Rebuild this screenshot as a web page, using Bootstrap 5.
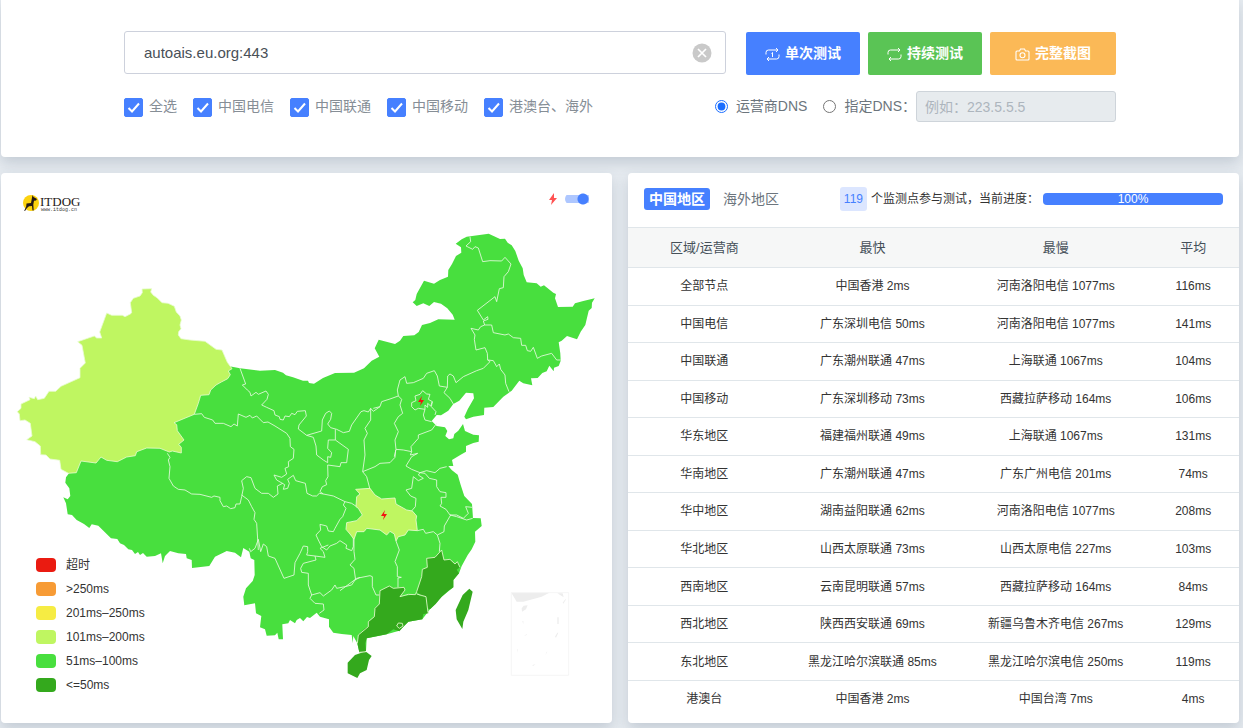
<!DOCTYPE html>
<html lang="zh-CN">
<head>
<meta charset="utf-8">
<meta name="viewport" content="width=device-width, initial-scale=1">
<title>ITDOG TCPing</title>
<link href="https://cdn.jsdelivr.net/npm/bootstrap@5.3.0/dist/css/bootstrap.min.css" rel="stylesheet">
<style>
:root{--brand:#4680ff}
body{background:#e6ebf0;font-family:"Liberation Sans","Noto Sans CJK SC",sans-serif;font-size:14px;color:#3b4248}
.page{padding:0 4px 5px 1px}
.panel{background:#fff;border-radius:4px;box-shadow:0 6px 14px rgba(60,80,105,.2)}
.query{border-radius:0 0 4px 4px;padding:31px 16px 35px}
.query-inner{max-width:992px}
.target-box{min-width:260px}
.target-input{height:43px;padding:0 48px 0 19px;font-size:15px;border-color:#cdd1dc;border-radius:3px;color:#495057}
.clear-btn{right:14px;top:12px;width:20px;height:20px;line-height:0}
.action{height:43px;font-size:14px;font-weight:700;color:#fff;border:0;border-radius:2px;padding:0 19px;margin-top:1px}
.action:hover{color:#fff}
.action svg{margin-right:5px}
.action-blue,.action-blue:hover{background:var(--brand)}
.action-green,.action-green:hover{background:#5ac455}
.action-orange,.action-orange:hover{background:#fbb957;padding:0 25px}
.options{margin-top:16px;color:#868e96}
.tick{appearance:none;width:19px;height:19px;margin:2px 6px 0 0;border-radius:2px;border:1px solid #adb5bd}
.tick:checked{border-color:var(--brand);background:var(--brand) url("data:image/svg+xml,%3Csvg xmlns='http://www.w3.org/2000/svg' viewBox='0 0 17 17'%3E%3Cpath d='M3.500 9l3.500 3.500 7-8' fill='none' stroke='white' stroke-width='2'/%3E%3C/svg%3E") center/17px}
.dns{color:#6c757d}
.dns input[type=radio]{width:13px;height:13px;margin:0 8px 0 0;accent-color:#1a6dff}
.dns-input{width:200px;height:31px;padding:0 8px;font-size:14px;border-radius:3px;border-color:#ced4da}
.dns-input:disabled{background:#e7ebee}
.dns-input::placeholder{color:#adb5bd}
.panels{grid-template-columns:minmax(0,1fr);margin-top:16px}
@media(min-width:992px){.panels{grid-template-columns:minmax(0,1fr) minmax(0,1fr)}}
.map-head{padding:16px 22px 0;height:48px}
.toggle{appearance:none;width:25px;height:12px;margin:0;background:radial-gradient(circle at 18px 6px,var(--brand) 5px,transparent 6px),linear-gradient(#aec7ff,#aec7ff) 0 2px/24px 8px no-repeat;border-radius:6px}
.legend-list{left:35px;bottom:26px;font-size:12px;line-height:24px;color:#333}
.swatch{width:20px;height:14px;border-radius:4px;margin-right:10px}
.c-timeout{background:#ea1b11}.c-250{background:#f79b35}.c-201{background:#f6ec43}
.c-101{background:#bff661}.c-51{background:#48df3e}.c-50{background:#34a91d}
.result-head{height:54px;padding:0 16px 2px}
.region{font-size:14px;line-height:22px;padding:0 5px;border-radius:3px;color:#6c757d;text-decoration:none}
.region.active{background:var(--brand);color:#fff;font-weight:700}
.status{font-size:12px;color:#333}
.node-count{background:#dce6ff;color:var(--brand);border-radius:3px;line-height:24px;padding:0 4px;margin-right:4px}
.progress.test-progress{width:180px;height:12px;border-radius:4px;margin-left:4px;font-size:12px}
.test-progress .progress-bar{background:var(--brand)}
.result-table{table-layout:fixed;height:490px;font-size:12px;text-align:center;color:#333;border-color:#e0e6ea}
.result-table th,.result-table td{font-weight:400;padding:0 4px;vertical-align:middle;border:0;border-bottom:1px solid #e0e6ea}
.result-table thead th{height:40px;background:#f6f7f7;border-top:1px solid #e0e6ea;font-size:13px;color:#455059}
.result-table tbody tr:last-child>*{border-bottom:0}
</style>
</head>
<body>
<main class="page">
<section class="panel query">
 <div class="query-inner mx-auto">
  <form class="d-flex flex-wrap flex-lg-nowrap">
   <div class="target-box position-relative flex-fill me-lg-3">
    <input class="form-control target-input" type="text" aria-label="目标" value="autoais.eu.org:443">
    <button class="btn p-0 border-0 position-absolute clear-btn" type="button" aria-label="清空">
     <svg width="20" height="20" viewBox="0 0 20 20"><circle cx="10" cy="10" r="9.500" fill="#c9c9c9"/><path d="M6 6l8 8M14 6l-8 8" stroke="#fff" stroke-width="1.700"/></svg>
    </button>
   </div>
   <div class="d-flex gap-2 ps-1">
    <button class="btn action action-blue text-nowrap" type="button"><svg width="15" height="15" viewBox="0 0 15 15" fill="none" stroke="#fff"><path d="M1 7.500V5.500Q1 3 3.500 3H13M11 1l2 2-2 2M14 7.500v2Q14 12 11.500 12H2M4 10l-2 2 2 2M6.500 6.500l1-1V10"/></svg>单次测试</button>
    <button class="btn action action-green text-nowrap" type="button"><svg width="15" height="15" viewBox="0 0 15 15" fill="none" stroke="#fff"><path d="M1 7.500V5.500Q1 3 3.500 3H13M11 1l2 2-2 2M14 7.500v2Q14 12 11.500 12H2M4 10l-2 2 2 2"/></svg>持续测试</button>
    <button class="btn action action-orange text-nowrap" type="button"><svg width="15" height="15" viewBox="0 0 15 15" fill="none" stroke="#fff" stroke-width="1.100"><path d="M2 4h2.500l1-2h4l1 2H13q1 0 1 1v7q0 1-1 1H2q-1 0-1-1V5q0-1 1-1z"/><circle cx="7.500" cy="8.200" r="2.500"/></svg>完整截图</button>
   </div>
  </form>
  <div class="options d-flex flex-wrap justify-content-between align-items-center">
   <div class="d-flex flex-wrap gap-3">
    <label class="d-flex align-items-center"><input class="tick" type="checkbox" checked>全选</label>
    <label class="d-flex align-items-center"><input class="tick" type="checkbox" checked>中国电信</label>
    <label class="d-flex align-items-center"><input class="tick" type="checkbox" checked>中国联通</label>
    <label class="d-flex align-items-center"><input class="tick" type="checkbox" checked>中国移动</label>
    <label class="d-flex align-items-center"><input class="tick" type="checkbox" checked>港澳台、海外</label>
   </div>
   <div class="dns d-flex flex-wrap align-items-center">
    <label class="d-flex align-items-center me-3"><input type="radio" name="dns" checked>运营商DNS</label>
    <label class="d-flex align-items-center"><input type="radio" name="dns">指定DNS：</label>
    <input class="form-control dns-input" type="text" aria-label="DNS" placeholder="例如：223.5.5.5" disabled>
   </div>
  </div>
 </div>
</section>

<div class="panels d-grid gap-3">
<section class="panel position-relative">
 <div class="map-head d-flex justify-content-between align-items-start">
  <svg class="mt-1" width="60" height="20" viewBox="0 0 60 20">
   <circle cx="8" cy="10" r="8" fill="#fcd20e"/>
   <path d="M9.500 2l1 2 3.500 2-1 1.500-2 .2-.7 3.800.4 6H9.500L9 13l-3 .3-2 1.700-2 3-.8-.3 2-4.200.3-3L8 10z" fill="#231815"/>
   <text x="17" y="13" font-family="Liberation Serif,serif" font-size="13" fill="#231815">ITDOG</text>
   <text x="18" y="18" font-family="Liberation Mono,monospace" font-size="5" fill="#444">www.itdog.cn</text>
  </svg>
  <div class="d-flex align-items-center pt-1">
   <svg class="me-2" width="8" height="12" viewBox="0 0 8 12"><path d="M5 0L0 7h3L2 12l6-7H5z" fill="#ff5252"/></svg>
   <input class="toggle" type="checkbox" role="switch" aria-label="闪电标记" checked>
  </div>
 </div>
 <svg class="d-block w-100" viewBox="1 221 611 502" role="img" aria-label="中国地图">
  <!-- mainland -->
  <path fill="#48df3e" d="M160 444L165 418 188 408 195 390 220 375 228 366 240 368.300 260 370.700 275 370 283 372.700 286 375.300 293 377.300 303 380.700 308 380.700 309 383 314 383.700 323 378 335 373 354 372.700 364 368.300 371.700 360.700 379.300 356.700 374.700 348.300 378.700 339.700 395 344 400 340.700 403.300 336 414.300 335.300 418.700 332 422 325 430 323 438.300 319.300 454.700 319.700 452.700 314.700 447.300 308.300 441 303.700 434 302 429.300 306 423.300 303.300 416.700 306 412.700 302.300 415.300 300 416.700 294 424 280.700 434 283.700 440 280 448 276.700 448.300 270 452 264 456 256 461.300 252.700 461 247.300 455.700 243.700 461.700 239.300 466.700 236.700 488.700 233.700 500 239 505 238.700 507.700 242.700 511.700 245.300 515.300 251 518.700 260.700 522.700 268.300 523.700 275 526.700 282.300 536.700 283.300 540.700 286.700 544 285.300 553.300 292.700 556 294 555 298.300 558 307 572.700 306.700 575 303.300 583.300 301 594.700 298.300 592 302.700 591.700 308 588.700 310.700 585.300 325 580.700 331.700 577 339.300 567 336 561.700 340.700 558.700 342.300 560.300 353.300 560.700 360.700 558.700 366 554 367.700 553.700 371.300 549.300 365.700 546.700 371.300 542.300 373 537.700 378 531 378.300 532.300 385.300 523.300 383.300 519.300 380.700 511.700 390.700 503.300 396.700 493.300 407 484.300 407.700 484 415 473.300 416.700 466 419.300 464.300 416.700 467.700 409.300 474 398.300 473.300 393.300 466 392.700 459.300 400.700 453.300 404 448.300 410.700 441 415.300 436.700 415 431.700 421 436.700 426 445 427.300 447.300 431 445.300 436 449 439.300 453.300 438.300 454.300 434 458.300 430.700 463 424 465 431 473.300 434.700 479 435.300 478.700 441.700 473.300 443 466 446 466 451.700 460.700 454.700 452 460 453.300 466 448.300 466 451.700 470 457.700 474.700 460.700 485 464.300 496 472 504 473 518 480.700 518.300 481.700 526 475 531.700 475.300 541.700 471.700 549.300 467.700 555 461.700 566 459 573.300 453.300 580 453.300 587.300 441.700 596.700 430 609.300 422.300 619.300 408.300 621.700 399.300 630.700 386.700 634.300 366.700 638.300 366 650.700 359.300 652.300 357.300 643.300 353.300 636 352.700 643.300 351.700 635 341.700 634 333.300 632.700 329 626.700 329 619.300 320 616.700 316.700 612.700 310 618 307 617 303.300 621.300 300 618 296.700 620 295 623.300 290 620 288.300 623.300 282.300 624.300 283 639.300 278.700 639.300 277.300 632.700 275 635.300 266.700 635.700 265 629.300 260 627.300 261.300 616 256 613.300 255 603.300 244.300 605.300 243.300 596.700 246 588.300 252.700 581 254.700 575 254.300 560 250.700 558.300 249.300 551.700 243.300 548 241 557.300 235 552.700 226.700 551 215 556.700 209.300 566 192 568 191.700 560 186.700 558.300 186 554 178.300 553.300 170 551 165 556 162.700 563.300 161 553.300 155 556 146.700 556.700 143 553 140 555 138 552 135 554 132 550 128.300 549.300 124 545 120 543.300 117.300 539 111 538.300 98.300 525.700 91.700 524.300 89.300 528 84 524 76.700 520 72 515 67.700 514.300 66 503.300 63.300 497.300 67.700 499.300 70.300 496 69.300 488.300 65.300 482.700 66 477.300 69 473.300 74 465 110 440z"/>
  <!-- Xinjiang -->
  <path fill="#bff661" stroke="#e9fbd2" stroke-width=".8" d="M142 289L151.700 288.700 150.700 292 153.300 295.300 157 297.700 162 302.700 168 303.300 174.300 306.300 176.300 312 180 316 181.300 320 180 325 181 328.700 178.700 331.700 178.300 335 181 338.700 190 340 205 341.300 216 349.300 222 350 227.300 362.300 232 368.700 228.300 371 230.300 374.700 227.700 378.700 221.300 382 216 385 210.700 390 209 394.700 200.700 395.300 198.300 403.300 194.300 414.300 174 422.700 176.700 424.700 177.300 430.700 184 440 178.700 444.300 181.300 447.300 181.300 453 172.300 451 169.300 452 160 448.300 146.700 448 136.700 451.700 135.300 455.700 126.700 457 117.300 461.700 106.700 460.300 101 457 96 463 81 461 76.300 472.700 68.300 473.300 61 469.300 59.700 460.300 50 459 46 455 40.700 454.700 40.300 446 35 441.700 26.700 439.700 32 436 30.300 423.300 25 420 20 420.700 19.300 414 17.300 411.700 21 408.300 21 404 30 399.700 29 397.300 34.300 398.700 35.700 396 37.700 399.700 44.300 398.300 49 391.300 55.700 391.300 61 386.300 80 377.700 80 368.300 85.300 363 82 345.300 77.700 341.700 94.300 336 96.700 338 101.700 338 99.700 332 106.700 313 111.700 315.300 122.300 315.300 125 316.700 130.300 314 131.700 312.700 130.300 302.700 133.300 298.300 140 296 142.300 292.700z"/>
  <!-- provincial borders -->
  <g fill="none" stroke="#e3f9dc" stroke-width="2.600" stroke-linejoin="round">
   <path transform="translate(160 360) scale(.33333)" d="M240 25L257 72 247 75 262 90 270 97 273 108 288 97 295 103 318 93 325 103 321 118 305 135 320 142 342 152 345 165 358 170 360 178 370 180 375 168 388 170 395 160 405 164 412 154 436 152 439 168 417 195 415 207 440 226 485 213 487 180 497 160 508 153 515 160 512 178 503 192 512 203 530 208 550 218 568 214 575 195 603 155 612 152 625 156 632 145 640 154 660 140M103 163L125 161 133 172 158 180 165 190 190 190 213 200 222 192 232 198 235 162 258 172 270 166 277 174 290 168 310 188 324 186 345 198 380 220 390 235 391 260 402 268 400 295 385 305 386 320 375 325 380 342 365 352 342 345 350 360 374 374 370 388 383 385 388 370 383 358 400 346 407 362 436 370 441 400 458 408 470 408 478 400 490 402 480 395 487 380 500 374 497 362 504 350 503 315M22 280L30 292 25 300 30 320 27 355 40 378 55 388 75 390 95 402 120 403 155 412 162 408 180 412 180 422 190 440 200 438 212 446 225 443 228 432 240 432 245 410 250 385 245 362 260 350 273 353 285 385 305 400 325 400 340 412 354 402 352 378 368 370M245 405L265 420 275 440 285 458 282 478 290 490 295 570M526 208L526 240 505 240 503 265 515 278 512 292 503 290 503 308 490 300 470 285 468 258 460 232 440 226M526 240L565 268 560 308 543 308 540 320 503 315M632 145L632 180 615 205 622 220 612 240 615 285 608 335 620 350 630 388M608 335L645 320 660 310 690 308 705 292 707 270M490 402L520 408 555 425 575 430 590 440M555 425L550 435 558 445 548 470 540 478 525 505 520 515 505 513 500 498 480 493 482 510 468 525 475 540 485 560 500 570 510 558 530 550 540 542 560 555 558 565 575 572 580 560 580 530"/>
   <path transform="translate(340 360) scale(.33333)" d="M100 145L120 140 125 125 150 117 175 108 172 90 180 60 195 50 200 70 220 68 250 55 260 40 283 32 292 48 298 78 322 82 323 48 330 42 340 48 348 68 370 50 410 32 430 25 450 5M175 108L185 118 180 135 188 160 175 170 163 190 175 215 165 240 168 268 163 290M168 268L190 270 215 275 213 260 235 235 235 225 275 210 290 190M215 275L211 285 233 280 215 290 198 318 215 328 240 338 260 332 285 338 300 325 320 320M322 82L312 98 330 115 340 132M248 92L260 102 270 103 265 118 277 125 272 138 263 130 263 142 255 135 255 148 235 145 225 150 215 140 215 128 228 122 225 108 240 103zM255 148L250 165 255 180 275 185M277 125L274 140 288 155 285 165M240 338L235 345 250 355 235 362 220 350 215 385 198 390 212 408 228 415 226 440 213 455M240 338L255 340 268 355 290 360 290 380 300 395 318 398 318 412 303 412 305 430 300 438 318 448 330 465 350 465 370 475 385 460 377 440 396 442M330 465L350 470 380 480 398 475"/>
   <path transform="translate(360 220) scale(.33333)" d="M330 50L332 65 318 78 338 88 345 80 355 84 368 125 390 122 425 123 435 112 453 132 445 155 432 170 430 203 418 206 410 245 405 230 352 271 370 300 383 290 384 298 370 303 374 315 395 315 400 338 435 345 445 342 460 353 482 355 485 376 497 376 502 392 512 394 520 382 532 415 545 408 575 400 590 420 602 420M374 315L362 320 355 330 333 325 345 345 343 358 348 390 375 383 382 400 383 420 400 422 410 440 418 432 422 448 435 465 437 490 447 515M383 420L390 425"/>
   <path transform="translate(340 480) scale(.33333)" d="M42 178L42 215 45 238 30 255 42 265 47 300M0 332L30 310 50 295 90 287 97 290 97 320 108 345 120 345M168 183L178 210 165 245 172 260 172 290 184 292 174 294 174 322M232 152L250 148 257 160 280 155 292 165 312 155 313 138 332 105M292 165L300 190 298 215"/>
   <path transform="translate(160 480) scale(.33333)" d="M295 178L302 215 310 192 320 200 325 228 345 235 372 295 402 285 405 248 420 220 430 198 443 200 443 215 440 225 465 228 468 240 430 250 422 265 425 277 445 280 445 315 455 345 480 338 490 348 515 330 525 315 530 325 555 320 575 315 585 300 600 292M455 345L450 355 465 370 490 372 492 390 478 400M465 228L495 232 490 215 480 205 505 195M295 178L285 205 272 215 268 205"/>
  </g>
  <!-- Hubei, then the south-east coast -->
  <g transform="translate(340 480) scale(.33333)" stroke="#e9fbd2" stroke-width="2.500" stroke-linejoin="round">
   <path fill="#bff661" d="M47 28L90 25 105 45 125 57 165 54 168 72 200 90 217 93 230 108 228 120 232 152 205 150 195 165 175 170 168 183 163 162 150 154 140 165 120 150 80 145 72 155 50 155 42 178 30 162 18 148 20 128 50 122 67 105 55 85 48 80 50 50 60 42z"/>
   <g fill="#34a91d">
    <path stroke="none" d="M305 210L312 240 330 238 345 252 352 245 360 262 350 269 357 280 340 300 340 322 325 332 305 350 287 372 270 388 262 385 258 350 245 348 230 335 245 290 247 268 262 262 260 235 285 232z"/>
    <path stroke="none" d="M118 345L120 332 148 318 160 325 192 322 195 330 180 350 230 342 240 348 258 350 265 400 250 402 247 418 205 425 190 440 178 454 160 448 140 463 95 472 80 475 76 490 78 512 72 518 58 517 52 490 55 465 75 445 85 440 85 425 103 410 105 385 118 372z"/>
    <path stroke="none" d="M78 515L95 528 87 540 80 570 60 580 52 594 23 580 23 548 45 525 60 520zM388 326L398 335 385 390 370 425 367 447 350 418 347 390 368 345z"/>
    <path fill="none" d="M360 262L352 245 345 252 330 238 312 240 305 210 285 232 260 235 262 262 247 268 245 290 230 335 226 344 205 343 180 350 195 330 192 322 160 325 148 318 120 332 118 372 105 385 103 410 85 425 85 440 55 465 52 490M230 342L258 350 264 398M58 517L78 515M170 438L175 429 187 430 189 438 178 445z"/>
   </g>
   <!-- South China Sea inset -->
   <g stroke="none" fill="#ededed"><path d="M514 338H628L605 350 550 365 530 365zM545 385l6-8 12-1-5 12-12 7zM652 340h16l3 12zM668 368l9-12v4l-7 11zM652 412h4v20h-4zM645 470l7-12h3l-7 15zM532 508h2v10zM547 423h3v10zM552 468l8-6v3zM616 525l4-10h2zM577 555l10-2-8 5zM447 303l4 3z"/></g>
   <rect x="514" y="338" width="172" height="248" fill="none" stroke="#f3f3f3"/>
  </g>
  <path d="M422 396l-4 6h3l-1 4 4-6h-3zM385 510l-4 6h3l-1 4 4-6h-3z" fill="#f31212"/>
 </svg>
 <ul class="legend-list list-unstyled position-absolute mb-0">
  <li class="d-flex align-items-center"><span class="swatch c-timeout"></span>超时</li>
  <li class="d-flex align-items-center"><span class="swatch c-250"></span>&gt;250ms</li>
  <li class="d-flex align-items-center"><span class="swatch c-201"></span>201ms–250ms</li>
  <li class="d-flex align-items-center"><span class="swatch c-101"></span>101ms–200ms</li>
  <li class="d-flex align-items-center"><span class="swatch c-51"></span>51ms–100ms</li>
  <li class="d-flex align-items-center"><span class="swatch c-50"></span>&lt;=50ms</li>
 </ul>
</section>

<section class="panel overflow-hidden">
 <div class="result-head d-flex align-items-center justify-content-between">
  <nav class="d-flex gap-2"><a class="region active" href="#">中国地区</a><a class="region" href="#">海外地区</a></nav>
  <div class="status d-flex align-items-center text-nowrap">
   <span class="node-count">119</span>个监测点参与测试，当前进度：
   <div class="progress test-progress" role="progressbar" aria-label="进度" aria-valuenow="100" aria-valuemin="0" aria-valuemax="100"><div class="progress-bar" style="width:100%">100%</div></div>
  </div>
 </div>
 <table class="table result-table mb-0">
  <colgroup><col style="width:25%"><col style="width:30%"><col style="width:30%"><col style="width:15%"></colgroup>
  <thead><tr><th>区域/运营商</th><th>最快</th><th>最慢</th><th>平均</th></tr></thead>
  <tbody>
   <tr><td>全部节点</td><td>中国香港 2ms</td><td>河南洛阳电信 1077ms</td><td>116ms</td></tr>
   <tr><td>中国电信</td><td>广东深圳电信 50ms</td><td>河南洛阳电信 1077ms</td><td>141ms</td></tr>
   <tr><td>中国联通</td><td>广东潮州联通 47ms</td><td>上海联通 1067ms</td><td>104ms</td></tr>
   <tr><td>中国移动</td><td>广东深圳移动 73ms</td><td>西藏拉萨移动 164ms</td><td>106ms</td></tr>
   <tr><td>华东地区</td><td>福建福州联通 49ms</td><td>上海联通 1067ms</td><td>131ms</td></tr>
   <tr><td>华南地区</td><td>广东潮州联通 47ms</td><td>广东广州电信 201ms</td><td>74ms</td></tr>
   <tr><td>华中地区</td><td>湖南益阳联通 62ms</td><td>河南洛阳电信 1077ms</td><td>208ms</td></tr>
   <tr><td>华北地区</td><td>山西太原联通 73ms</td><td>山西太原电信 227ms</td><td>103ms</td></tr>
   <tr><td>西南地区</td><td>云南昆明联通 57ms</td><td>西藏拉萨移动 164ms</td><td>84ms</td></tr>
   <tr><td>西北地区</td><td>陕西西安联通 69ms</td><td>新疆乌鲁木齐电信 267ms</td><td>129ms</td></tr>
   <tr><td>东北地区</td><td>黑龙江哈尔滨联通 85ms</td><td>黑龙江哈尔滨电信 250ms</td><td>119ms</td></tr>
   <tr><td>港澳台</td><td>中国香港 2ms</td><td>中国台湾 7ms</td><td>4ms</td></tr>
  </tbody>
 </table>
</section>
</div>
</main>
<script src="https://cdn.jsdelivr.net/npm/bootstrap@5.3.0/dist/js/bootstrap.bundle.min.js"></script>
</body>
</html>
